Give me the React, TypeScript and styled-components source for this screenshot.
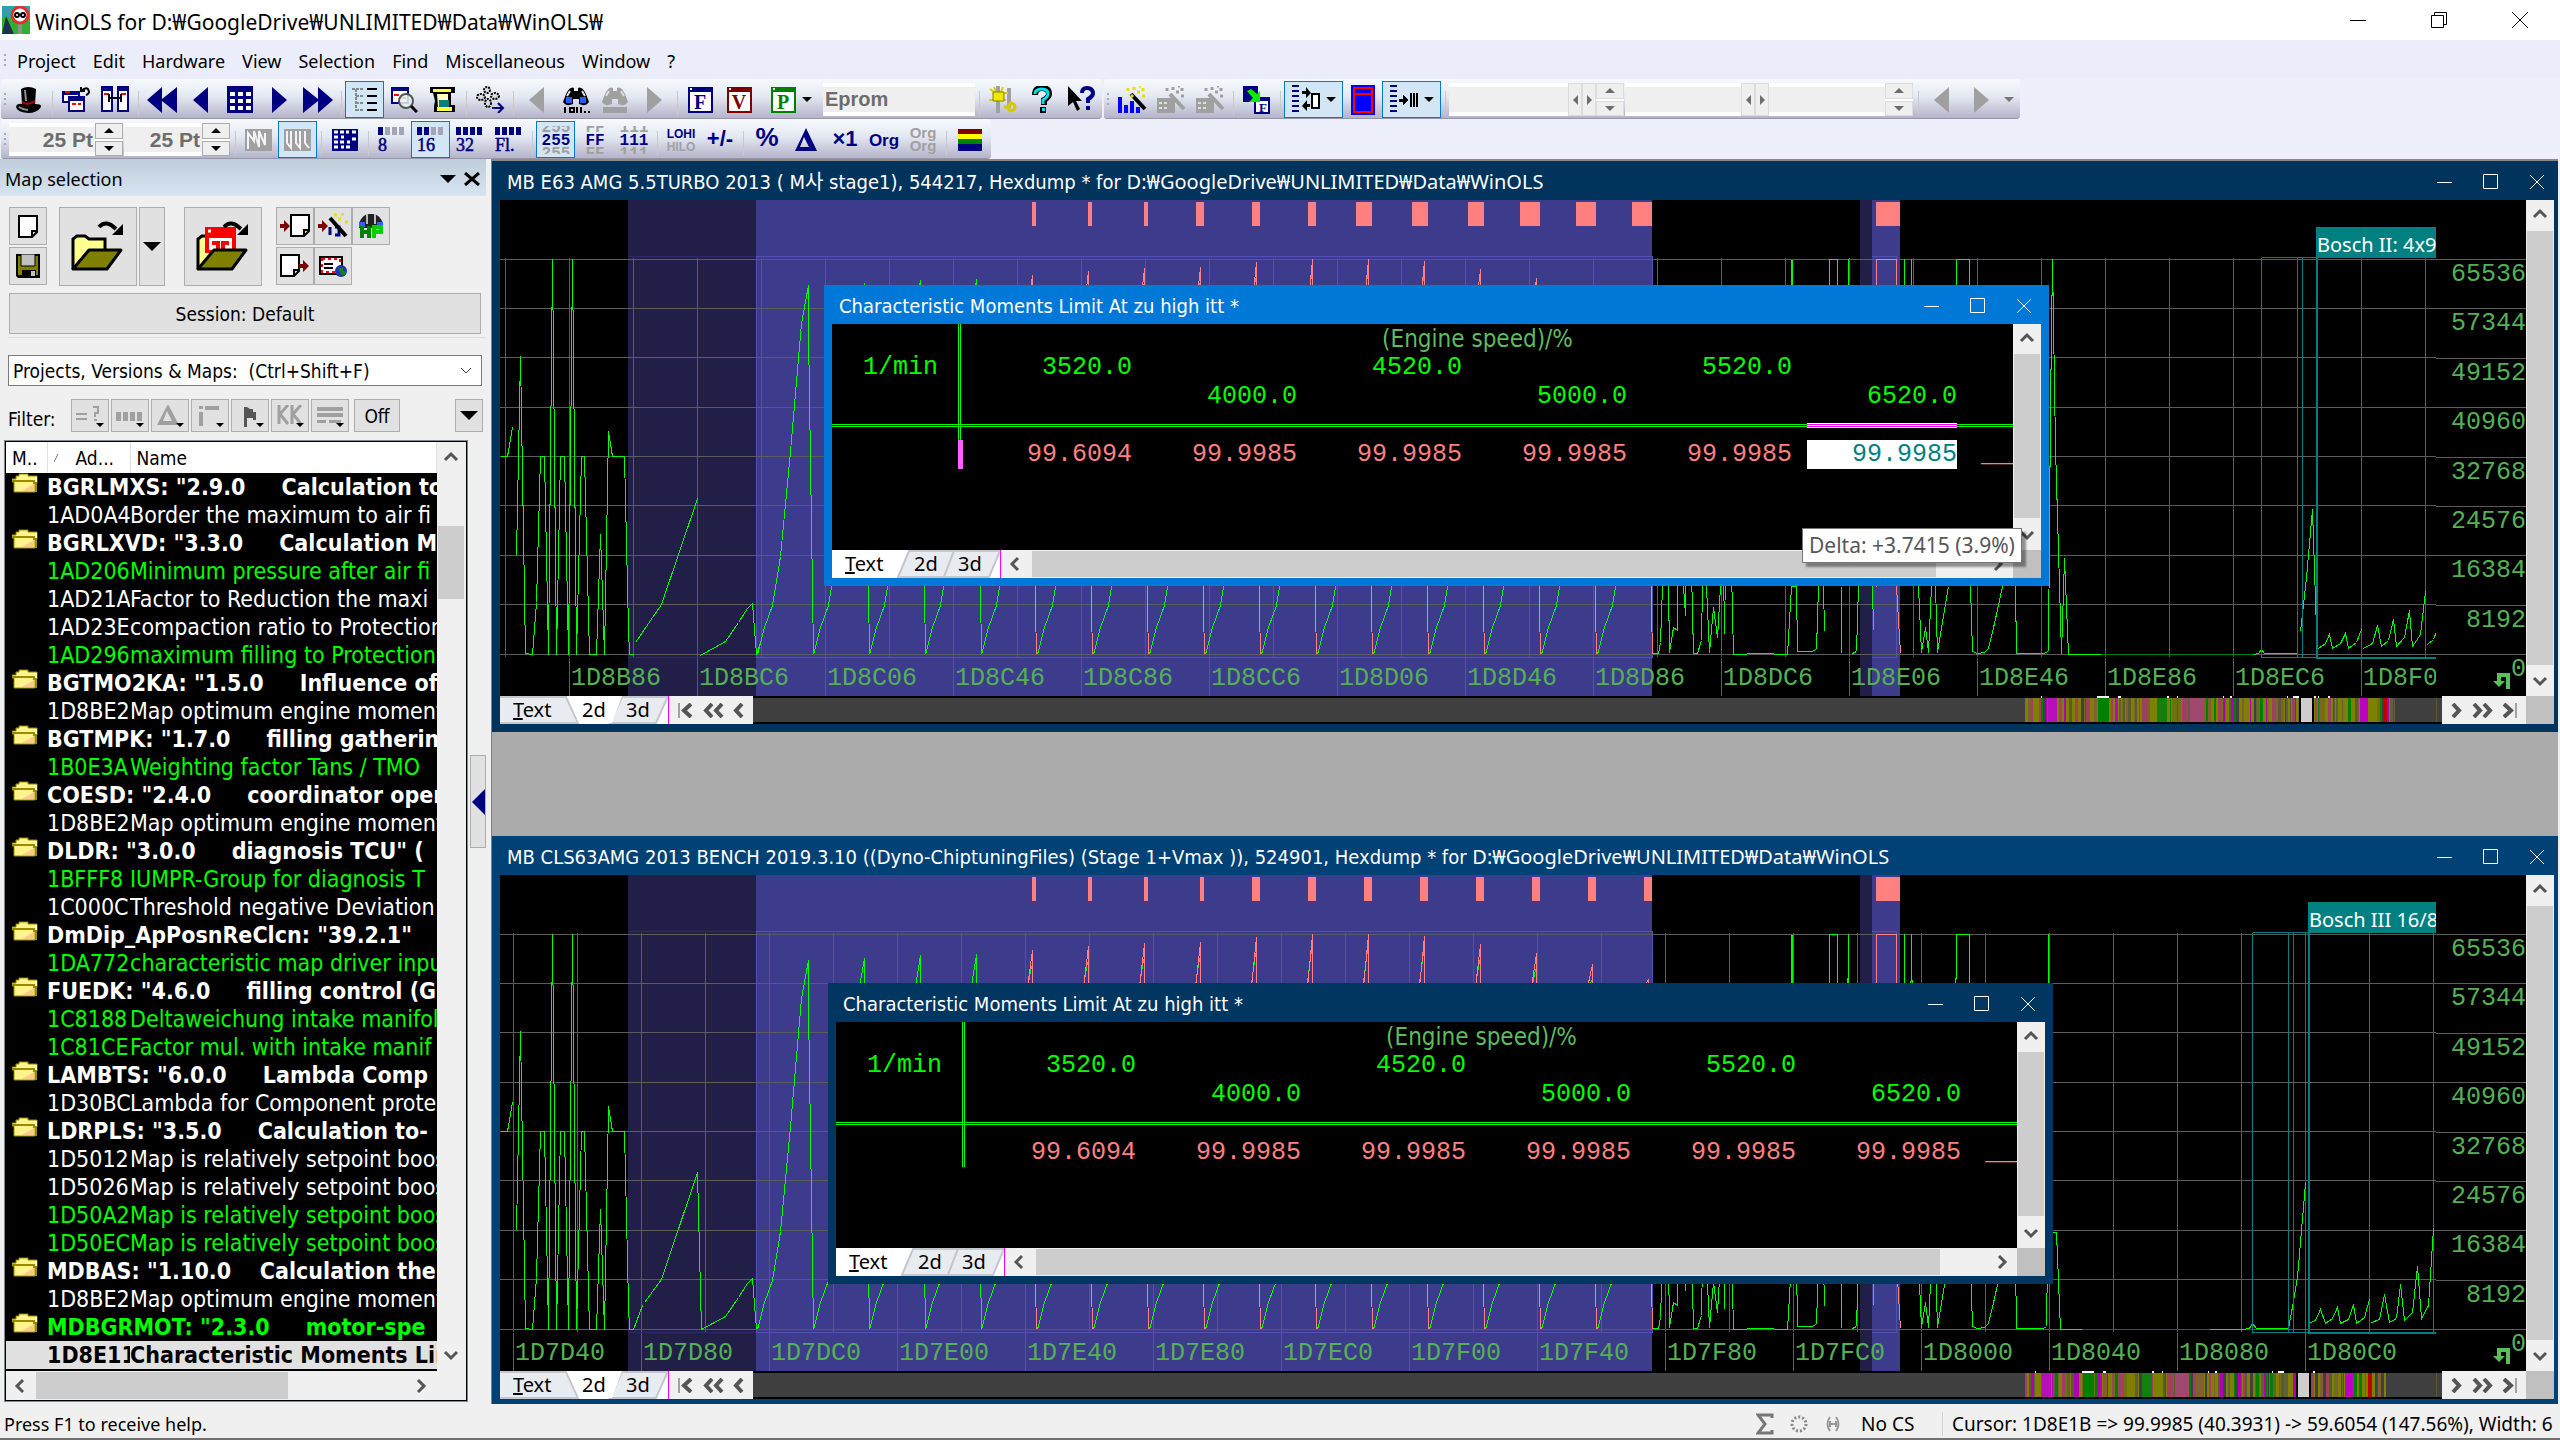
import React from "react";
import styled, { createGlobalStyle, css } from "styled-components";

const UI = `"Noto Sans", "Noto Sans CJK KR", sans-serif`;
const TAHOMA = `"DejaVu Sans Condensed", "Noto Sans CJK KR", sans-serif`;
const MONO = `"Liberation Mono", monospace`;
const NAVY = "#000080";
const LIME = "#00ff00";
const ROSE = "#ff8080";
const GREY = "#a0a0a0";

const GlobalStyle = createGlobalStyle`
  * { box-sizing: border-box; }
  html, body { margin: 0; background: #f0f0f0; overflow: hidden; }
  button, input, select { font: inherit; color: inherit; margin: 0; padding: 0; border: 0; border-radius: 0; }
  svg { display: block; flex: none; }
`;

/* ───────────── frame ───────────── */

const Page = styled.div`
  display: flex;
  flex-direction: column;
  min-height: 100vh;
  font: 18px ${UI};
  color: #000;
`;

const TitleBar = styled.header`
  display: flex;
  align-items: center;
  height: 40px;
  padding-left: 2px;
  background: #fff;
`;
const AppTitle = styled.h1`
  flex: 1;
  margin: 0 0 0 5px;
  padding-top: 4px;
  font: 21px/28px ${UI};
`;
const CaptionButton = styled.button<{ $w: number }>`
  display: grid;
  place-items: center;
  width: ${(p) => p.$w}px;
  height: 100%;
  background: none;
  color: inherit;
`;
const ButtonCluster = styled.div`
  display: flex;
  gap: 12px;
  height: 100%;
`;

const MenuBar = styled.nav`
  display: flex;
  align-items: center;
  height: 39px;
  padding: 3px 0 0 4px;
  background: #ebeefa;
`;
const MenuList = styled.div`
  display: flex;
  gap: 17px;
  margin-left: 11px;
`;
const MenuItem = styled.button`
  background: none;
  font-size: 18px;
  line-height: 24px;
`;
const Grip = styled.span`
  width: 2px;
  height: 14px;
  flex: none;
  background: repeating-linear-gradient(#a6a9b8 0 2px, transparent 2px 5px);
`;

/* ───────────── toolbars ───────────── */

const ToolArea = styled.div`
  display: flex;
  flex-direction: column;
  background: #edf0fb;
`;
const ToolRow = styled.div`
  display: flex;
  gap: 2px;
  height: 40px;
  padding-left: 1px;
`;
const ToolBarBox = styled.div`
  display: flex;
  align-items: center;
  height: 40px;
  padding: 2px 2px 0 3px;
  border-bottom: 1px solid #9696a8;
  border-radius: 3px 4px 4px 3px;
  background: linear-gradient(#f6fafd, #e4e8f2 45%, #b4b4ca);
`;
const ToolGrip = styled(Grip)`
  margin-right: 3px;
`;
const Tool = styled.button<{ $on?: boolean; $w?: number }>`
  display: flex;
  align-items: center;
  justify-content: center;
  gap: 6px;
  flex: none;
  width: ${(p) => p.$w ?? 39}px;
  height: 37px;
  background: ${(p) => (p.$on ? "#d3e6f5" : "none")};
  border: 1px solid ${(p) => (p.$on ? "#0078d7" : "transparent")};
`;
const Sep = styled.span`
  flex: none;
  width: 1px;
  height: 25px;
  margin: 8px 3px 0 4px;
  background: #c9c9c9;
`;
const ToolField = styled.input<{ $w: number; $right?: boolean }>`
  width: ${(p) => p.$w}px;
  height: 33px;
  padding: 0 2px;
  border-top: 4px solid #fff;
  border-bottom: 4px solid #fff;
  background: #efefef;
  color: #6d6d6d;
  font: bold ${(p) => (p.$right ? 21 : 20)}px "Liberation Sans", sans-serif;
  text-align: ${(p) => (p.$right ? "right" : "left")};
`;
const SpinBox = styled.span`
  display: grid;
  grid-template-rows: 1fr 1fr;
  gap: 2px;
  width: 28px;
  height: 33px;
  margin-right: 1px;
  background: #fff;
`;
const SplitBox = styled(SpinBox)`
  grid-template: 1fr / 1fr 1fr;
  gap: 0;
  margin-right: 0;
`;
const SpinButton = styled.button<{ $dim?: boolean }>`
  display: grid;
  place-items: center;
  background: #efefef;
  border: 1px solid ${(p) => (p.$dim ? "#dcdcdc" : "#adadad")};
  color: ${(p) => (p.$dim ? "#6d6d6d" : "#000")};
`;

const Tri = ({ d, s = 5, c = "currentColor" }: { d: "u" | "d" | "l" | "r"; s?: number; c?: string }) => {
  const w = s * 2;
  const p = {
    u: `M0 ${s}L${s} 0L${w} ${s}z`,
    d: `M0 0L${w} 0L${s} ${s}z`,
    l: `M${s} 0L${s} ${w}L0 ${s}z`,
    r: `M0 0L${s} ${s}L0 ${w}z`,
  }[d];
  const flat = d === "u" || d === "d";
  return (
    <svg width={flat ? w : s} height={flat ? s : w} aria-hidden="true">
      <path d={p} fill={c} />
    </svg>
  );
};

const Spin = ({ dim, label }: { dim?: boolean; label: string }) => (
  <SpinBox>
    <SpinButton $dim={dim} aria-label={`${label} up`}><Tri d="u" /></SpinButton>
    <SpinButton $dim={dim} aria-label={`${label} down`}><Tri d="d" /></SpinButton>
  </SpinBox>
);
const Split = ({ label }: { label: string }) => (
  <SplitBox>
    <SpinButton $dim aria-label={`${label} left`}><Tri d="l" /></SpinButton>
    <SpinButton $dim aria-label={`${label} right`}><Tri d="r" /></SpinButton>
  </SplitBox>
);

/* ───────────── icons ───────────── */

const Ico = ({ w = 28, h = 27, children }: { w?: number; h?: number; children: React.ReactNode }) => (
  <svg width={w} height={h} viewBox={`0 0 ${w} ${h}`} aria-hidden="true">{children}</svg>
);
const Arrow = ({ back, double, c = NAVY }: { back?: boolean; double?: boolean; c?: string }) => (
  <Ico w={30} h={26}>
    <g fill={c} transform={back ? "translate(30 0) scale(-1 1)" : undefined}>
      {double ? <path d="M0 0L15 12V0L30 13L15 26V14L0 26z" /> : <path d="M8 0L23 13L8 26z" />}
    </g>
  </Ico>
);
const HatIcon = () => (
  <Ico>
    <path d="M6 3Q13-1 21 3L20 18Q27 18 26 21Q22 27 13 27Q1 26 1 20Q3 17 7 18z" fill="#000" />
    <path d="M10 4L11 15M4 21Q8 24 13 24" stroke="#909090" strokeWidth="2" fill="none" />
    <path d="M7 16Q13 20 20 15" stroke="#c00000" strokeWidth="2" fill="none" />
  </Ico>
);
const WindowsIcon = () => (
  <Ico w={30}>
    <path d="M1 5h18v5h5v16H7V17H1z" fill={NAVY} />
    <path d="M3 9h14v1H7v5H3zM9 15h13v9H9z" fill="#fff" />
    <path d="M4 6h5M11 18h4M17 18h3" stroke="red" strokeWidth="2" />
    <path d="M20 1v4h4M20 5Q27-1 28 6Q28 8 25 9" stroke="#000" strokeWidth="2" fill="none" />
  </Ico>
);
const CompareIcon = () => (
  <Ico w={30}>
    <path d="M1 0h12v26H1zM17 0h12v26H17z" fill={NAVY} />
    <path d="M3 5h8v19H3zM19 5h8v19H19z" fill="#fff" />
    <path d="M4 8h5M21 8h5" stroke="red" strokeWidth="2" />
    <path d="M9 12h12M9 8v8M21 8v8" stroke="#000" strokeWidth="2" />
  </Ico>
);
const GridIcon = () => (
  <Ico>
    <path d="M1 0h26v27H1z" fill={NAVY} />
    <path d="M4 6h5v4H4zM12 6h5v4h-5zM20 6h5v4h-5zM4 13h5v4H4zM12 13h5v4h-5zM20 13h5v4h-5zM4 20h5v4H4zM12 20h5v4h-5zM20 20h5v4h-5z" fill="#fff" />
  </Ico>
);
const TreeIcon = () => (
  <Ico>
    <path d="M5 3v22M1 3h12M5 10h8M5 17h8M5 24h8" stroke="#888" strokeWidth="2" fill="none" strokeDasharray="3 1" />
    <path d="M16 3h10M16 10h10M16 17h10M16 24h10" stroke="#000" strokeWidth="2" />
  </Ico>
);
const ZoomWinIcon = () => (
  <Ico>
    <path d="M1 1h18v17H1z" fill={NAVY} />
    <path d="M3 5h14v11H3z" fill="#fff" />
    <path d="M4 9h5M11 12h5" stroke="red" strokeWidth="2" />
    <circle cx="16" cy="15" r="7" fill="#e8f0f0" fillOpacity=".85" stroke="#555" strokeWidth="2" />
    <path d="M21 20l6 6" stroke="#000" strokeWidth="3" />
  </Ico>
);
const ScrollIcon = () => (
  <Ico>
    <path d="M1 1h25v6h-4v12h4v7H5v-6l1-5-2-8H1z" fill="#000" />
    <path d="M4 3h18v3H4zM8 21h15v4H8z" fill="#ffff40" />
    <path d="M8 8h11v13H9z" fill="#ffffc0" />
    <path d="M10 14h10v7H10z" fill="#008080" />
  </Ico>
);
const StepsIcon = () => (
  <Ico w={30}>
    <g fill="#ddd" stroke="#000" strokeWidth="2" strokeDasharray="2 1">
      <ellipse cx="6" cy="11" rx="4" ry="3" /><ellipse cx="12" cy="4" rx="3" ry="3" />
      <ellipse cx="13" cy="17" rx="3" ry="4" /><ellipse cx="20" cy="10" rx="4" ry="3" />
    </g>
    <path d="M17 22h11M23 17l5 5-5 5" stroke={NAVY} strokeWidth="2" fill="none" />
  </Ico>
);
const BinocularIcon = ({ dim }: { dim?: boolean }) => (
  <Ico>
    <path d="M4 8Q8 0 12 2V5h4V2Q20 0 24 8L27 16Q24 21 17 18V13H11V18Q4 21 1 16z" fill={dim ? GREY : "#000"} />
    <path d="M8 5l-3 5M20 5l3 5" stroke="#e0e0e0" strokeWidth="2" />
    {dim ? <path d="M2 21h24v6H2z" fill={GREY} /> : (
      <>
        <path d="M4 11h6v6H4zM18 11h6v6h-6z" fill="#2060ff" />
        <path d="M3 21v6M8 22h4v4H8zM15 21v6M19 21v6M22 26h2M26 26h2" stroke="#000" strokeWidth="2" fill="none" />
      </>
    )}
  </Ico>
);
const LetterIcon = ({ l, c }: { l: string; c: string }) => (
  <Ico w={25} h={26}>
    <path d="M0 0h25v26H0z" fill={c} />
    <path d="M2 5h21v19H2z" fill="#fff" />
    <path d="M2 2h2" stroke="#fff" strokeWidth="2" />
    <text x="12" y="22" fontFamily="Liberation Serif, serif" fontWeight="700" fontSize="20" textAnchor="middle" fill={c}>{l}</text>
  </Ico>
);
const PlugIcon = () => (
  <Ico>
    <path d="M9 0v6M9 14v13M20 2v20" stroke="#a0a0a0" strokeWidth="4" />
    <path d="M1 3l4 3M0 14h6M5 1l2 5M14 1l-2 5M14 7h5M15 14h2" stroke="#d8d000" strokeWidth="2" />
    <path d="M4 6h11v9H4z" fill="#f0e800" stroke="#808000" />
    <path d="M15 21h5M20 17v8M20 17q6 0 6 4t-6 4" stroke="#d8c800" strokeWidth="3" fill="none" />
  </Ico>
);
const HelpIcon = () => (
  <Ico>
    <path d="M7 9Q7 2 14 2Q21 2 21 8Q21 11 16 14V19" stroke="#000" strokeWidth="6" fill="none" />
    <path d="M7 8Q7 3 14 3Q20 3 20 8Q20 11 15 14V18" stroke="#00e0f0" strokeWidth="3" fill="none" />
    <path d="M12 21h6v6h-6z" fill="#000" /><path d="M14 22h3v3h-3z" fill="#00e0f0" />
  </Ico>
);
const PointerHelpIcon = () => (
  <Ico>
    <path d="M1 0v20l5-4 4 9 3-2-4-8h6z" fill="#000" />
    <path d="M15 7Q15 2 20 2Q26 2 26 8Q25 11 21 13V17" stroke={NAVY} strokeWidth="4" fill="none" />
    <path d="M19 20h4v4h-4z" fill={NAVY} />
  </Ico>
);
const WandIcon = ({ dim }: { dim?: boolean }) => (
  <Ico w={30} h={28}>
    {dim ? (
      <g fill={GREY}><path d="M1 12h18v15H1z" /><path d="M3 17h3M8 17h3M3 22h3M8 22h3" stroke="#ddd" strokeWidth="2" /></g>
    ) : (
      <path d="M1 11h4v16H1zM7 19h4v8H7zM13 15h4v12h-4zM19 21h4v6h-4z" fill="#0000ff" />
    )}
    <path d="M14 8l14 15" stroke={dim ? GREY : "#000"} strokeWidth="4" />
    <path d="M11 2v3M17 1v3M20 6h3M26 2v3M25 10h3M22 0h2M14 9l2 2" stroke={dim ? GREY : "#e8e000"} strokeWidth="3" />
  </Ico>
);
const CopyVersionIcon = () => (
  <Ico w={30} h={28}>
    <path d="M1 0h15v16H1zM12 11h16v17H12z" fill={NAVY} />
    <path d="M14 15h12v11H14z" fill="#fff" />
    <text x="21" y="26" fontFamily="Liberation Serif, serif" fontWeight="700" fontSize="13" textAnchor="middle" fill={NAVY}>F</text>
    <path d="M5 5l4-2 6 5 3-3v11H7l4-4z" fill="#00f000" />
  </Ico>
);
const LinkIcon = ({ bars }: { bars?: boolean }) => (
  <Ico h={30}>
    <path d="M0 1h7M0 6h7M0 11h7M0 16h7M0 21h7M0 26h7" stroke={NAVY} strokeWidth="2" />
    {bars ? (
      <g shapeRendering="crispEdges">
        <path d="M9 14h5v3H9z" /><path d="M13 10l5 5-5 6z" />
        <path d="M20 8h2v14h-2zM23 8h2v14h-2zM26 8h2v14h-2z" />
      </g>
    ) : (
      <>
        <path d="M10 6h4V2l5 6-5 5V9h-4zM18 19h-3v-4l-5 6 5 5v-4h3z" />
        <path d="M20 9h7v14h-7z" fill="#fff" stroke="#000" strokeWidth="2" />
      </>
    )}
  </Ico>
);
const RedBoxIcon = () => (
  <Ico w={24} h={30}>
    <path d="M1 1h22v28H1z" fill="#0000ff" stroke="#0000ff" strokeWidth="2" />
    <path d="M3 3h18v24H3zM3 9h18" fill="none" stroke="red" strokeWidth="2" />
  </Ico>
);
const BitsIcon = ({ n, t }: { n: number; t: string }) => (
  <Ico w={27} h={32}>
    {[0, 1, 2, 3].map((i) => <path key={i} d={`M${i * 7} 3h5v8h-5z`} fill={i < n ? NAVY : "#a4a4b4"} />)}
    <text x="0" y="27" fontFamily="Liberation Serif, serif" fontSize="18" fill={NAVY} stroke={NAVY} strokeWidth=".5">{t}</text>
  </Ico>
);
const StackIcon = ({ t }: { t: string }) => (
  <Ico w={30} h={28}>
    {[6, 19, 32].map((y, i) => (
      <text key={y} x="15" y={y} fontFamily="Liberation Mono, monospace" fontWeight="700" fontSize="16" textAnchor="middle" fill={i === 1 ? NAVY : GREY}>{t}</text>
    ))}
  </Ico>
);
const WaveIcon = ({ alt }: { alt?: boolean }) => (
  <Ico w={27} h={22}>
    <path d="M0 0h27v22H0z" fill={GREY} />
    <path d={alt ? "M3 2v12l4 5V2M12 2v12l4 5V2M21 2v12l4 5" : "M3 20V4l6 8V2l5 16V2l6 14V4"} stroke="#f4f4f8" strokeWidth="2" fill="none" />
  </Ico>
);
const TableIcon = () => (
  <Ico w={26} h={22}>
    <path d="M0 0h26v22H0z" fill={NAVY} />
    <path d="M2 3h4M8 3h4M14 3h3M20 3h4M2 8h4M9 8h3M2 13h4M8 13h4M15 13h3M20 10h4M2 18h4M9 18h3M14 18h4" stroke="#fff" strokeWidth="3" />
  </Ico>
);
const WordIcon = ({ a, b, size, c = NAVY, c2 = GREY }: { a: string; b?: string; size: number; c?: string; c2?: string }) => (
  <Ico w={32} h={28}>
    <text x="16" y={b ? 12 : 20} fontFamily="Liberation Sans, sans-serif" fontWeight="700" fontSize={size} textAnchor="middle" fill={c}>{a}</text>
    {b && <text x="16" y="25" fontFamily="Liberation Sans, sans-serif" fontWeight="700" fontSize={size} textAnchor="middle" fill={c2}>{b}</text>}
  </Ico>
);
const DeltaIcon = ({ c = NAVY }: { c?: string }) => (
  <Ico w={24} h={24}><path d="M12 0L23 23H1zM10 9L6 19h9z" fill={c} fillRule="evenodd" /></Ico>
);
const FlagIcon = () => (
  <Ico w={24} h={22}>
    <path d="M0 0h24v6H0z" fill="#800000" /><path d="M0 5h24v6H0z" fill="#ffff00" />
    <path d="M0 10h24v6H0z" fill="#008000" /><path d="M0 15h24v7H0z" fill={NAVY} />
  </Ico>
);
const AppIcon = () => (
  <Ico w={28} h={28}>
    <path d="M0 0h28v14H0z" fill="#30a0b0" /><path d="M0 12h28v16H0z" fill="#30b030" />
    <path d="M0 28L4 10l8 18z" fill="#203050" />
    <path d="M16 16h4v12h-4z" fill="#909090" />
    <circle cx="18" cy="9" r="8" fill="#fff" stroke="#e03030" strokeWidth="3" />
    <circle cx="15" cy="9" r="2" fill="none" stroke="#000" strokeWidth="2" /><circle cx="21" cy="9" r="2" fill="none" stroke="#000" strokeWidth="2" />
  </Ico>
);

/* ───────────── map selection panel ───────────── */

const Main = styled.main`
  display: flex;
  flex: 1;
  min-height: 0;
`;
const Side = styled.aside`
  display: flex;
  flex-direction: column;
  width: 486px;
  margin-right: 5px;
  flex: none;
  background: #f0f0f0;
`;
const SideHead = styled.div`
  display: flex;
  align-items: center;
  height: 37px;
  padding: 3px 2px 0 5px;
  background: linear-gradient(#bfcddb, #d7e4f2);
`;
const SideTitle = styled.h2`
  flex: 1;
  margin: 0;
  font: 18px/26px ${UI};
`;
const PlainButton = styled.button`
  display: grid;
  place-items: center;
  width: 24px;
  height: 24px;
  background: none;
`;
const ActionRow = styled.div`
  display: flex;
  padding: 11px 9px 0;
`;
const ButtonGrid = styled.div<{ $cols: number; $left: number }>`
  display: grid;
  grid-template-columns: repeat(${(p) => p.$cols}, 38px);
  grid-auto-rows: 38px;
  gap: 2px 0;
  margin-left: ${(p) => p.$left}px;
`;
const WinButton = styled.button<{ $w?: number; $h?: number; $ml?: number }>`
  display: grid;
  place-items: center;
  width: ${(p) => (p.$w ? `${p.$w}px` : "auto")};
  height: ${(p) => (p.$h ? `${p.$h}px` : "auto")};
  margin-left: ${(p) => p.$ml ?? 0}px;
  background: #e1e1e1;
  border: 1px solid #adadad;
  font: 19px ${TAHOMA};
`;
const SessionButton = styled(WinButton)`
  height: 41px;
  margin: 7px 5px 3px 9px;
`;
const Rule = styled.hr`
  width: 478px;
  margin: 0 0 17px 8px;
  border: 0;
  border-top: 1px solid #dcdcdc;
`;
const Scope = styled.label`
  position: relative;
  display: block;
  height: 31px;
  margin: 0 4px 12px 8px;
`;
const ScopeSelect = styled.select`
  appearance: none;
  width: 100%;
  height: 31px;
  padding: 0 4px;
  background: #fff;
  border: 1px solid #7a7a7a;
  font: 19px ${TAHOMA};
`;
const ScopeArrow = styled.span`
  position: absolute;
  right: 10px;
  top: 12px;
  pointer-events: none;
`;
const FilterRow = styled.div`
  display: flex;
  align-items: center;
  gap: 2px;
  height: 33px;
  margin: 1px 3px 9px 8px;
  font: 19px ${TAHOMA};
`;
const FilterLabel = styled.span`
  width: 61px;
  padding-top: 6px;
`;
const Fill = styled.span`
  flex: 1;
`;
const FilterButton = styled(WinButton)`
  position: relative;
  width: 38px;
  height: 33px;
`;
const CornerMark = styled.span`
  position: absolute;
  right: 4px;
  bottom: 4px;
`;
const ListArea = styled.div`
  display: flex;
  flex: 1;
  align-items: flex-start;
  padding-left: 5px;
`;
const ListBox = styled.div`
  width: 462px;
  height: 960px;
  border: 1px solid #000;
  outline: 1px solid #828790;
  background: #f0f0f0;
  display: grid;
  grid-template: 929px 29px / 431px 28px;
`;
const ListClip = styled.div`
  overflow: hidden;
  background: #000;
`;
const MapTable = styled.table`
  width: 431px;
  table-layout: fixed;
  border-collapse: collapse;
  font: 23px/28px ${TAHOMA};
  white-space: pre;
`;
const HeadCell = styled.th`
  height: 31px;
  padding: 0 0 0 6px;
  overflow: hidden;
  background: #fff;
  border-right: 1px solid #e0e0e0;
  font: 19px ${TAHOMA};
  text-align: left;
`;
const SortHead = styled.span`
  display: flex;
  align-items: center;
  gap: 17px;
`;
const MapRow = styled.tr<{ $c: string; $sel?: boolean; $bold?: boolean }>`
  height: 28px;
  color: ${(p) => p.$c};
  background: ${(p) => (p.$sel ? "#e1e1e1" : "#000")};
  font-weight: ${(p) => (p.$bold ? 700 : 400)};
`;
const MapCell = styled.td`
  height: 28px;
  padding: 0;
  overflow: hidden;
  vertical-align: top;
`;
const IconCell = styled(MapCell)`
  padding: 0 0 0 6px;
`;
const Collapse = styled(WinButton)`
  width: 16px;
  height: 93px;
  margin: 314px 0 0 3px;
  justify-items: end;
`;

/* scroll bars */
const VBar = styled.div`
  display: flex;
  flex-direction: column;
  width: 28px;
  background: #f0f0f0;
`;
const HBar = styled.div`
  display: flex;
  flex: 1;
  background: #f0f0f0;
`;
const ArrowButton = styled.button<{ $len: number; $v?: boolean }>`
  display: grid;
  place-items: center;
  flex: none;
  background: #f0f0f0;
  ${(p) => (p.$v ? css`height: ${p.$len}px;` : css`width: ${p.$len}px;`)}
`;
const Span = styled.span<{ $g: number; $thumb?: boolean }>`
  flex: ${(p) => p.$g} 1 0;
  margin: ${(p) => (p.$thumb ? "1px" : "0")};
  background: ${(p) => (p.$thumb ? "#cdcdcd" : "none")};
`;
const Chevron = ({ d }: { d: "u" | "d" | "l" | "r" }) => {
  const p = { u: "M2 10L8 4L14 10", d: "M2 5L8 11L14 5", l: "M10 2L4 8L10 14", r: "M5 2L11 8L5 14" }[d];
  return <svg width="16" height="16" aria-hidden="true"><path d={p} fill="none" stroke="#555" strokeWidth="3" /></svg>;
};

const Folder = () => (
  <svg width="27" height="20" viewBox="0 0 27 20" aria-hidden="true">
    <path d="M4 3h3V1h9v2h9v7h-2v9H2V9H0V6h4z" fill="#fdf58c" stroke="#9a8a00" strokeWidth="1" />
    <path d="M0 8h22v2h2v9" fill="none" stroke="#9a8a00" strokeWidth="2" />
    <path d="M10 18h12v-7z" fill="#fbc890" />
    <path d="M24 4h1v5h-2z" fill="#fffbe0" />
  </svg>
);

type Entry = { g?: boolean; a?: string; t: string; green?: boolean; sel?: boolean };
const entries: Entry[] = [
  { g: true, t: 'BGRLMXS: "2.9.0     Calculation to' },
  { a: "1AD0A4", t: "Border the maximum to air fi" },
  { g: true, t: 'BGRLXVD: "3.3.0     Calculation M' },
  { a: "1AD206", t: "Minimum pressure after air fi", green: true },
  { a: "1AD21A", t: "Factor to Reduction the maxi" },
  { a: "1AD23E", t: "compaction ratio to Protection" },
  { a: "1AD296", t: "maximum filling to Protection", green: true },
  { g: true, t: 'BGTMO2KA: "1.5.0     Influence of' },
  { a: "1D8BE2", t: "Map optimum engine moment" },
  { g: true, t: 'BGTMPK: "1.7.0     filling gathering' },
  { a: "1B0E3A", t: "Weighting factor Tans / TMO", green: true },
  { g: true, t: 'COESD: "2.4.0     coordinator oper' },
  { a: "1D8BE2", t: "Map optimum engine moment" },
  { g: true, t: 'DLDR: "3.0.0     diagnosis TCU" (' },
  { a: "1BFFF8", t: "IUMPR-Group for diagnosis T", green: true },
  { a: "1C000C", t: "Threshold negative Deviation" },
  { g: true, t: 'DmDip_ApPosnReClcn: "39.2.1"' },
  { a: "1DA772", t: "characteristic map driver input", green: true },
  { g: true, t: 'FUEDK: "4.6.0     filling control (G' },
  { a: "1C8188", t: "Deltaweichung intake manifol", green: true },
  { a: "1C81CE", t: "Factor mul. with intake manif", green: true },
  { g: true, t: 'LAMBTS: "6.0.0     Lambda Comp' },
  { a: "1D30BC", t: "Lambda for Component protec" },
  { g: true, t: 'LDRPLS: "3.5.0     Calculation to-' },
  { a: "1D5012", t: "Map is relatively setpoint boos" },
  { a: "1D5026", t: "Map is relatively setpoint boos" },
  { a: "1D50A2", t: "Map is relatively setpoint boos", green: true },
  { a: "1D50EC", t: "Map is relatively setpoint boos", green: true },
  { g: true, t: 'MDBAS: "1.10.0    Calculation the' },
  { a: "1D8BE2", t: "Map optimum engine moment" },
  { g: true, t: 'MDBGRMOT: "2.3.0     motor-spe', green: true },
  { a: "1D8E11", t: "Characteristic Moments Lim", sel: true },
];

const OpenFolder = ({ project }: { project?: boolean }) => (
  <Ico w={56} h={52}>
    <path d="M3 48V18l4-3h8l4 3h16v10" fill="#ffff90" stroke="#000" strokeWidth="3" />
    {project && (
      <>
        <path d="M10 6h31v26H10z" fill="red" />
        <path d="M14 17h23v12H14z" fill="#fff" />
        <path d="M17 22h6v8M34 22h-6v8" stroke="red" strokeWidth="4" fill="none" />
        <path d="M13 10h3" stroke="#fff" strokeWidth="3" />
      </>
    )}
    <path d="M3 48L19 29h32L37 48z" fill="#808000" stroke="#000" strokeWidth="3" strokeLinejoin="round" />
    <path d="M29 6Q36-2 46 8" stroke="#000" strokeWidth="4" fill="none" />
    <path d="M53 3v11H42z" fill="#000" />
  </Ico>
);
const Doc = ({ x = 0 }: { x?: number }) => (
  <path transform={`translate(${x} 0)`} d="M1 2h18v16l-5 5H1z M19 17h-5v6" fill="#fff" stroke="#000" strokeWidth="2" />
);
const RedArrow = ({ x = 0 }: { x?: number }) => (
  <path transform={`translate(${x} 0)`} d="M0 11h4V7l6 6-6 6v-4H0z" fill="#800000" />
);

const FilterIcons: [string, React.ReactNode][] = [
  ["Filter by unknown", <path d="M0 9h11M0 14h11M17 2h5v6h-3v4M18 15h3" stroke={GREY} strokeWidth="2" fill="none" />],
  ["Filter by bits", <path d="M0 7h5v9H0zM7 7h5v9H7zM14 7h5v9h-5zM21 7h5v9h-5z" fill={GREY} />],
  ["Filter by difference", <path d="M12-1L23 20H1zM11 6L7 16h9z" fill={GREY} fillRule="evenodd" />],
  ["Filter by axis", <path d="M3 1h4v3H3zM9 1h14v4H9zM3 7h4v14H3z" fill={GREY} />],
  ["Filter by flag", <path d="M8 2h3l3 2h3v3h3v8h-3v-2h-6v9H8z" fill="#555" />],
  ["Filter by name", <path d="M3 0v19M12 0L4 9l8 10M16 0v19M25 0l-8 9 8 10" stroke={GREY} strokeWidth="3" fill="none" />],
  ["Filter by comment", <path d="M1 2h26v4H1zM1 8h26v4H1zM1 15h9v3H1zM13 15h12v3H13z" fill={GREY} />],
];

const MapSelection = () => (
  <Side>
    <SideHead>
      <SideTitle>Map selection</SideTitle>
      <PlainButton aria-label="Panel menu"><Tri d="d" s={8} /></PlainButton>
      <PlainButton aria-label="Close panel">
        <svg width="16" height="14"><path d="M1 1L15 13M15 1L1 13" stroke="#000" strokeWidth="3" /></svg>
      </PlainButton>
    </SideHead>
    <ActionRow>
      <ButtonGrid $cols={1} $left={0}>
        <WinButton aria-label="New"><Ico w={20} h={24}><Doc /></Ico></WinButton>
        <WinButton aria-label="Save">
          <Ico w={24} h={24}>
            <path d="M0 0h24v24H2l-2-2z" fill="#000" /><path d="M2 2h20v19H2z" fill="#808000" />
            <path d="M5 0h14v12H5z" fill="#c0c0c0" stroke="#000" /><path d="M6 16h14v7H6z" fill="#000" /><path d="M15 17h4v5h-4z" fill="#c0c0c0" />
          </Ico>
        </WinButton>
      </ButtonGrid>
      <WinButton $w={78} $h={79} $ml={12} aria-label="Open"><OpenFolder /></WinButton>
      <WinButton $w={26} $h={79} $ml={2} aria-label="Open menu"><Tri d="d" s={9} /></WinButton>
      <WinButton $w={78} $h={79} $ml={19} aria-label="Open project"><OpenFolder project /></WinButton>
      <ButtonGrid $cols={3} $left={14}>
        <WinButton aria-label="Import"><Ico w={30} h={26}><RedArrow /><Doc x={10} /></Ico></WinButton>
        <WinButton aria-label="Import wizard">
          <Ico w={30} h={26}><RedArrow /><path d="M12 14v8M17 14h4v8h-4" stroke={NAVY} strokeWidth="3" fill="none" /><path d="M12 5l16 18" stroke="#000" strokeWidth="4" />
            <path d="M16 2h3M23 1h3M20 6h3M27 9h3" stroke="#e8e000" strokeWidth="3" /></Ico>
        </WinButton>
        <WinButton aria-label="Find project">
          <Ico w={28} h={26}>
            <path d="M2 10Q6 0 14 1Q22 0 26 10V15H2z" fill="#222" /><path d="M10 1v10M18 1v10" stroke="#bbb" strokeWidth="2" />
            <path d="M2 9h6v5H2zM20 9h6v5h-6z" fill="#3060ff" />
            <path d="M5 13v12M12 13v12M5 19h7" stroke="#008000" strokeWidth="4" fill="none" />
            <path d="M17 25V14h7v5h-6" stroke="#00d000" strokeWidth="4" fill="none" />
          </Ico>
        </WinButton>
        <WinButton aria-label="Export"><Ico w={30} h={26}><Doc /><RedArrow x={19} /></Ico></WinButton>
        <WinButton aria-label="Mail">
          <Ico w={28} h={24}>
            <path d="M1 3h22v17H1z" fill="#fff" stroke="#000" strokeWidth="2" />
            <path d="M3 5h18v13H3z" fill="none" stroke="red" strokeWidth="2" strokeDasharray="3 3" />
            <path d="M5 10h9M5 14h9" stroke="#000" strokeWidth="2" />
            <circle cx="22" cy="17" r="6" fill="#2030c0" /><path d="M19 14h5v3h3v4h-5z" fill="#108020" />
          </Ico>
        </WinButton>
      </ButtonGrid>
    </ActionRow>
    <SessionButton>Session: Default</SessionButton>
    <Rule />
    <Scope>
      <ScopeSelect aria-label="Scope" defaultValue="pvm">
        <option value="pvm">Projects, Versions &amp; Maps:&nbsp; (Ctrl+Shift+F)</option>
      </ScopeSelect>
      <ScopeArrow><svg width="12" height="8"><path d="M1 1L6 6L11 1" fill="none" stroke="#444" strokeWidth="1" /></svg></ScopeArrow>
    </Scope>
    <FilterRow>
      <FilterLabel>Filter:</FilterLabel>
      {FilterIcons.map(([label, icon]) => (
        <FilterButton key={label} aria-label={label}>
          <Ico w={28} h={22}>{icon}</Ico>
          <CornerMark><Tri d="d" s={4} c="#000" /></CornerMark>
        </FilterButton>
      ))}
      <WinButton $w={46} $h={33} $ml={3}>Off</WinButton>
      <Fill />
      <WinButton $w={28} $h={33} aria-label="Filter menu"><Tri d="d" s={9} /></WinButton>
    </FilterRow>
    <ListArea>
      <ListBox>
        <ListClip>
          <MapTable>
            <colgroup><col style={{ width: 41 }} /><col style={{ width: 83 }} /><col /></colgroup>
            <thead>
              <tr>
                <HeadCell>M..</HeadCell>
                <HeadCell><SortHead><svg width="5" height="8" aria-hidden="true"><path d="M0 8L4 0" stroke="#777" /></svg>Ad...</SortHead></HeadCell>
                <HeadCell>Name</HeadCell>
              </tr>
            </thead>
            <tbody>
              {entries.map((e, i) => (
                <MapRow key={i} $c={e.sel ? "#000" : e.green ? LIME : "#fff"} $sel={e.sel} $bold={e.g || e.sel}>
                  <IconCell>{e.g && <Folder />}</IconCell>
                  {e.g ? <MapCell colSpan={2}>{e.t}</MapCell> : <><MapCell>{e.a}</MapCell><MapCell>{e.t}</MapCell></>}
                </MapRow>
              ))}
            </tbody>
          </MapTable>
        </ListClip>
        <VBar>
          <ArrowButton $v $len={32} aria-label="Scroll up"><Chevron d="u" /></ArrowButton>
          <Span $g={51} /><Span $g={73} $thumb /><Span $g={741} />
          <ArrowButton $v $len={32} aria-label="Scroll down"><Chevron d="d" /></ArrowButton>
        </VBar>
        <HBar>
          <ArrowButton $len={29} aria-label="Scroll left"><Chevron d="l" /></ArrowButton>
          <Span $g={253} $thumb /><Span $g={116} />
          <ArrowButton $len={33} aria-label="Scroll right"><Chevron d="r" /></ArrowButton>
        </HBar>
      </ListBox>
      <Collapse aria-label="Collapse panel"><Tri d="l" s={13} c={NAVY} /></Collapse>
    </ListArea>
  </Side>
);

/* ───────────── MDI workspace ───────────── */

const Workspace = styled.section`
  position: relative;
  flex: 1;
  min-height: 1245px;
  margin: 0 2px 2px 0;
  overflow: hidden;
  background: #ababab;
  border-left: 1px solid #808080;
  border-top: 2px solid #8a8a8a;
`;
const MdiWindow = styled.section<{ $top: number; $bg: string }>`
  position: absolute;
  left: 0;
  right: 0;
  top: ${(p) => p.$top}px;
  padding: 0 4px 8px 8px;
  background: ${(p) => p.$bg};
  color: #fff;
`;
const PopupWindow = styled(MdiWindow)<{ $left: number }>`
  left: ${(p) => p.$left}px;
  right: auto;
  width: 1225px;
  padding-right: 8px;
`;
const Caption = styled.header`
  display: flex;
  align-items: center;
  height: 39px;
  padding-left: 7px;
  font: 20px ${TAHOMA};
`;
const CaptionText = styled.h2`
  flex: 1;
  margin: 0;
  padding-top: 2px;
  font: inherit;
  line-height: 26px;
  white-space: nowrap;
`;
const PathText = styled.span`
  font-family: ${UI};
`;
const Body = styled.div<{ $h: number }>`
  display: flex;
  height: ${(p) => p.$h}px;
  background: #000;
`;
const Plot = styled.svg`
  flex: 1;
  min-width: 0;
`;
const Axis = styled.div`
  display: grid;
  grid-template-rows: repeat(8, 1fr) 42px;
  width: 90px;
  padding-top: 59px;
`;
const AxisMark = styled.div`
  display: flex;
  justify-content: flex-end;
  align-items: flex-start;
  border-top: 1px solid #5c5c5c;
  color: #55b055;
  font: 25px/30px ${MONO};
`;
const BottomBar = styled.div`
  display: flex;
  height: 28px;
`;
const Corner = styled.span`
  width: 28px;
  background: #c0c0c0;
`;
const TabStrip = styled.div`
  position: relative;
  display: flex;
  width: 169px;
  background: #fff;
  border-right: 1px solid #ff00ff;
  color: #000;
  font: 20px/26px ${UI};
`;
const TabShape = styled.svg`
  position: absolute;
  left: 0;
  top: 0;
`;
const Tab = styled.button<{ $w: number; $pl: number }>`
  position: relative;
  width: ${(p) => p.$w}px;
  padding-left: ${(p) => p.$pl}px;
  background: none;
  text-align: left;
`;
const NavGroup = styled.div`
  display: flex;
  align-items: center;
  justify-content: space-evenly;
  width: 84px;
  background: #f0f0f0;
`;
const NavButton = styled.button`
  background: none;
`;

const CaptionButtons = () => (
  <ButtonCluster>
    <CaptionButton $w={34} aria-label="Minimize"><svg width="16" height="16"><path d="M0 9.5h15" stroke="currentColor" /></svg></CaptionButton>
    <CaptionButton $w={34} aria-label="Maximize"><svg width="16" height="18"><path d="M.5 2.5h14v14h-14z" fill="none" stroke="currentColor" /></svg></CaptionButton>
    <CaptionButton $w={34} aria-label="Close"><svg width="16" height="18"><path d="M1 3L15 17M15 3L1 17" stroke="currentColor" /></svg></CaptionButton>
  </ButtonCluster>
);

const Tabs = ({ active }: { active: "Text" | "2d" }) => (
  <TabStrip>
    <TabShape width="168" height="28" aria-hidden="true">
      <g stroke="#c4c8cd" strokeWidth="2">
        {active === "2d" ? (
          <>
            <path d="M-2 1H66L78 27H-2z" fill="#e8ecf0" />
            <path d="M122 1H180V0H168L156 27H110z" fill="#e8ecf0" />
            <path d="M67 0H122L112 27H79z" fill="#fff" stroke="none" />
          </>
        ) : (
          <>
            <path d="M77 1H122L112 27H66z" fill="#e8ecf0" />
            <path d="M122 1H168L157 27H112z" fill="#e8ecf0" />
          </>
        )}
      </g>
    </TabShape>
    <Tab $w={71} $pl={13}><u>T</u>ext</Tab>
    <Tab $w={44} $pl={11}>2d</Tab>
    <Tab $w={53} $pl={11}>3d</Tab>
  </TabStrip>
);

const Jump = ({ d, w = 12 }: { d: string; w?: number }) => (
  <svg width={w} height="15" aria-hidden="true"><path d={d} fill="none" stroke="#555" strokeWidth="4" /></svg>
);
const JumpEnd = ({ back }: { back?: boolean }) => (
  <svg width="15" height="15" aria-hidden="true">
    <path d={back ? "M13 1L6 7.5L13 14" : "M2 1L9 7.5L2 14"} fill="none" stroke="#555" strokeWidth="4" />
    <path d={back ? "M1 0V15" : "M14 0V15"} stroke="#555" strokeWidth="1" />
  </svg>
);

/* overview strip: colour runs over the address range */
const stripColors = ["#808000", "#404040", "#808000", "#008000", "#808000", "#a04060", "#808000", "#5a5a30", "#b000b0", "#808000", "#806030", "#606040", "#808000", "#707010"];
const stripBlocks: [number, number, string][] = [
  [23, 9, "#b810b8"], [73, 11, "#008000"], [90, 2, "#c000c0"], [132, 10, "#108010"], [157, 6, "#a04060"], [165, 14, "#a04870"], [335, 8, "#c000c0"], [358, 4, "#c00000"],
];
const stripMarks: [number, number][] = [[16, 1], [72, 12], [93, 3], [142, 2], [152, 1], [198, 1], [205, 2], [262, 1], [268, 6], [289, 2], [293, 1], [303, 2]];
const Strip = styled.svg`
  flex: 1;
  min-width: 0;
  background: #000;
`;
const Overview = ({ shift }: { shift: number }) => {
  const bars: React.ReactNode[] = [];
  let seed = 7 + shift;
  for (let x = 0; x < 370 - shift * 3; ) {
    seed = (seed * 48271) % 2147483647;
    const w = 1 + ((seed >> 8) % 3);
    bars.push(<rect key={x} x={1272 + x} y="2" width={w} height="24" fill={stripColors[(seed >> 12) % stripColors.length]} />);
    x += w;
  }
  return (
    <Strip height="28" aria-hidden="true" shapeRendering="crispEdges">
      <rect y="2" width="100%" height="24" fill="#404040" />
      {bars}
      {stripBlocks.map(([x, w, c]) => <rect key={x} x={1272 + x - shift * (x > 60 ? 5 : 2)} y="2" width={w} height="24" fill={c} />)}
      {stripMarks.map(([x, w]) => <rect key={x} x={1272 + x - shift * (x > 60 ? 5 : 2)} width={w} height="2" fill="#fff" />)}
      <rect x={1546 - shift} width="15" height="28" fill="#000" />
      <rect x={1548 - shift} y="2" width="11" height="24" fill="#cdcdcd" />
      <rect x="1683" y="2" width="1" height="24" fill="#5a5a30" />
    </Strip>
  );
};

/* ───────────── chart data ───────────── */

const peaks = [85, 83, 80, 79, 75, 71, 68, 67, 62, 59, 59, 61, 69, 78, 89, 104];
const startWave =
  "M0 256H7L12 227M16 355L20 156L25 453L32 454L36 402L40 256H44L48 454L52 59L56 454L60 256H64L68 454L72 59L76 454L81 256H84L89 454H96L100 334L104 454L108 231L112 256H124L128 428L129 454H133";
const rise = (k: number) => {
  const x = 257 + 56 * k;
  const p = peaks[k];
  return `M${x} 454L${x + 7} 427L${x + 15} 405L${x + 23} 356L${x + 33} 251L${x + 44} 123L${x + 51} ${p}`;
};
const greenRises = peaks
  .map((p, k) => (k < 4 ? `${rise(k)}L${308 + 56 * k} 131L${313 + 56 * k} 454` : rise(k).replace(/L[^L]*$/, `L${307 + 56 * k} ${p + 16}`)))
  .join("");
const redPeaks = peaks
  .map((p, k) => (k < 4 ? "" : `M${303 + 56 * k} 112L${308 + 56 * k} ${p}V270L${312 + 56 * k} 454`))
  .join("");
const midWave =
  "M1152 453H1158L1160 442L1162 386L1165 250L1168 386L1169 452L1173 427L1177 430V386L1180 260L1183 386L1185 415L1188 180L1191 370L1193 453H1197L1201 440L1202 386L1204 300L1206 386L1209 452L1213 407L1217 437L1220 386L1222 300L1224 433L1225 370H1231L1233 454L1260 453L1287 454L1291 386V59M1292 59V386H1296L1297 451H1311L1316 449L1318 386L1320 200L1323 386L1324 431M1328 386L1329 59H1337L1338 386M1341 386V452M1346 240L1348 59L1349 200M1352 453L1356 451L1358 386M1372 386L1373 430M1404 59L1406 380L1409 250L1411 59L1413 240L1418 386L1421 452L1425 427L1428 452L1431 386L1433 320L1435 386L1437 452L1448 386L1454 240L1456 59H1469L1470 386L1472 451L1477 453L1484 452L1488 448L1494 423L1502 386L1508 320H1514L1516 453H1543";
const tails = {
  a: "M1543 453L1548 451L1550 207L1552 59L1555 247L1561 453L1564 358L1568 454H1600M1753 454L1758 453L1761 449L1764 453H1796M1800 431L1806 377L1812 309L1816 430M1818 448L1825 443L1829 434L1832 448L1840 443L1845 433L1848 448L1856 442L1861 429M1863 448L1872 443L1877 425L1881 446L1888 440L1893 419L1896 446L1904 437L1909 410L1912 446L1920 434L1925 391M1927 444L1933 439L1936 431",
  b: "M1543 453L1546 451L1547 386L1548 59V386M1552 357H1556L1560 454H1581M1709 454H1742L1749 453L1752 448L1756 453H1788L1793 426L1797 402L1805 308M1808 448L1815 445L1820 434L1825 448L1832 443L1837 432L1840 448L1848 444L1853 429L1856 448L1864 442L1869 424M1871 447L1879 444L1884 419L1889 447L1896 443L1900 409L1904 445L1912 437L1917 391L1921 443L1928 430L1933 353M1936 441",
};

type ChartSpec = {
  gridX: number;
  labelX: number;
  labels: string[];
  blocks: number[];
  humps: string;
  tail: string;
  mark: number;
  markText: string;
  links: number[];
};
const Chart = ({ s }: { s: ChartSpec }) => {
  const rows = [59, 108, 157, 207, 256, 305, 355, 404, 454];
  return (
    <Plot height="496" role="img" aria-label="Hexdump 2d view">
      <g shapeRendering="crispEdges">
        <rect x="128" width="128" height="496" fill="#211f47" />
        <rect x="256" width="896" height="496" fill="#3d3b8c" />
        <rect x="1360" width="12" height="496" fill="#211f47" />
        <rect x="1372" width="28" height="496" fill="#3d3b8c" />
        <path d="M128 56.5H256M128 457.5H256" stroke="#2c2a68" />
        <path d="M256 56.5H1152V457.5H256zM1372 56.5H1396V457.5H1372" stroke="#5250b4" fill="none" />
        {rows.map((y) => <line key={y} x1="0" x2="100%" y1={y + 0.5} y2={y + 0.5} stroke="#5c5c5c" />)}
        {Array.from({ length: 31 }, (_, i) => s.gridX + 64 * i).map((x) => (
          <line key={x} x1={x + 0.5} x2={x + 0.5} y1="58" y2="457" stroke="#5c5c5c" />
        ))}
        {s.labels.map((_, i) => (
          <line key={i} x1={s.labelX + 128 * i + 0.5} x2={s.labelX + 128 * i + 0.5} y1="458" y2="496" stroke="#5c5c5c" />
        ))}
        {s.blocks.map((w, i) => <rect key={i} x={536 + 56 * i - w} y="2" width={w} height="24" fill={ROSE} />)}
        <rect x="1376" y="2" width="24" height="24" fill={ROSE} />
      </g>
      <g fill="none" strokeWidth="1" shapeRendering="crispEdges" transform="translate(0.5 0.5)">
        <path d="M1568 454H1753" stroke="#008000" />
        <path d={startWave + s.humps + greenRises + midWave + s.tail} stroke={LIME} />
        <path d={`${redPeaks}M1376 386V59H1396V386L1400 453`} stroke={ROSE} />
        <path d={`M${s.links[0]} 57H${s.mark}M${s.links[0]} 57V457M${s.links[1]} 57V457M${s.links[1] + 5} 57V457M${s.links[0]} 457H${s.mark}`} stroke="#008080" />
      </g>
      <path d={`M${s.mark + 1} 57V458H1937`} stroke="#008080" strokeWidth="2" fill="none" />
      <rect x={s.mark} y="27" width={1936 - s.mark} height="31" fill="#008080" />
      <svg x={s.mark} y="27" width={1936 - s.mark} height="31">
        <text x="1" y="25" fontFamily={UI} fontSize="20" fill="#fff">{s.markText}</text>
      </svg>
      <g fontFamily={MONO} fontSize="25" fill="#55b055">
        {s.labels.map((t, i) => <text key={t} x={s.labelX + 128 * i + 2} y="485">{t}</text>)}
      </g>
    </Plot>
  );
};

const scale = ["65536", "57344", "49152", "40960", "32768", "24576", "16384", "8192", "0"];
const ReturnSlot = styled.span`
  padding-top: 17px;
`;
const ReturnArrow = () => (
  <ReturnSlot>
    <svg width="18" height="17" aria-hidden="true"><path d="M15 17V3H6V11" fill="none" stroke="#5abf5a" strokeWidth="4" /><path d="M0 9h12l-6 6z" fill="#5abf5a" /></svg>
  </ReturnSlot>
);

const Hexdump = ({ top, bg, title, path, shift, spec }: { top: number; bg: string; title: string; path: string; shift: number; spec: ChartSpec }) => (
  <MdiWindow $top={top} $bg={bg}>
    <Caption>
      <CaptionText>{title}<PathText>{path}</PathText></CaptionText>
      <CaptionButtons />
    </Caption>
    <Body $h={496}>
      <Chart s={spec} />
      <Axis>
        {scale.map((v) => <AxisMark key={v}>{v === "0" && <ReturnArrow />}{v}</AxisMark>)}
      </Axis>
      <VBar>
        <ArrowButton $v $len={30} aria-label="Scroll up"><Chevron d="u" /></ArrowButton>
        <Span $g={1} $thumb />
        <ArrowButton $v $len={30} aria-label="Scroll down"><Chevron d="d" /></ArrowButton>
      </VBar>
    </Body>
    <BottomBar>
      <Tabs active="2d" />
      <NavGroup>
        <NavButton aria-label="First"><JumpEnd back /></NavButton>
        <NavButton aria-label="Page back"><Jump w={22} d="M10 1L4 7.5L10 14M20 1L14 7.5L20 14" /></NavButton>
        <NavButton aria-label="Back"><Jump d="M10 1L4 7.5L10 14" /></NavButton>
      </NavGroup>
      <Overview shift={shift} />
      <NavGroup>
        <NavButton aria-label="Forward"><Jump d="M2 1L8 7.5L2 14" /></NavButton>
        <NavButton aria-label="Page forward"><Jump w={22} d="M2 1L8 7.5L2 14M12 1L18 7.5L12 14" /></NavButton>
        <NavButton aria-label="Last"><JumpEnd /></NavButton>
      </NavGroup>
      <Corner />
    </BottomBar>
  </MdiWindow>
);

/* ───────────── map popup ───────────── */

const TableClip = styled.div`
  flex: 1;
  overflow: hidden;
`;
const ValueTable = styled.table`
  width: 1181px;
  table-layout: fixed;
  border-collapse: separate;
  border-spacing: 0;
  font: 25px/28px ${MONO};
  text-align: right;
  white-space: nowrap;
`;
const rules = (c: string, gap: string) =>
  `linear-gradient(transparent 12px, ${gap} 12px 13px, ${c} 13px 14px, ${gap} 14px 15px, ${c} 15px 16px, ${gap} 16px 17px, transparent 17px)`;
const AxisCell = styled.th<{ $edge?: boolean; $line?: boolean }>`
  height: 29px;
  padding: 1px 0 0;
  color: ${LIME};
  font-weight: 400;
  ${(p) => p.$edge && css`border-left: 3px double ${LIME};`}
  ${(p) => p.$line && css`padding: 0; background: ${rules(LIME, "transparent")};`}
`;
const UnitCell = styled(AxisCell)`
  padding-right: 20px;
`;
const NameCell = styled(AxisCell)`
  padding-right: 19px;
  color: #5fba5f;
  font: 24px/28px ${TAHOMA};
  text-align: center;
`;
const ValueCell = styled.td<{ $edge?: "green" | "cursor" }>`
  height: 29px;
  padding: 0;
  overflow: hidden;
  color: ${ROSE};
  line-height: 29px;
  ${(p) => p.$edge === "green" && css`border-left: 3px double ${LIME};`}
  ${(p) => p.$edge === "cursor" && css`border-left: 5px solid #ff60ff;`}
`;
const MoreCell = styled(ValueCell)`
  padding-left: 24px;
  font-weight: 700;
  text-align: left;
`;
const CursorLine = styled.div`
  width: 150px;
  height: 29px;
  margin-left: auto;
  background: ${rules("#ff00ff", "#fff")};
`;
const CursorValue = styled.div`
  width: 150px;
  margin-left: auto;
  background: #fff;
  color: #008080;
`;
const Tooltip = styled.div`
  position: absolute;
  left: 978px;
  top: 243px;
  padding: 0 6px;
  background: #fff;
  border: 1px solid #767676;
  box-shadow: 4px 4px 2px rgba(0, 0, 0, 0.4);
  color: #575757;
  font: 21px/33px ${UI};
  white-space: nowrap;
`;

const upper = ["3520.0", "", "4520.0", "", "5520.0", ""];
const lower = ["", "4000.0", "", "5000.0", "", "6520.0"];
const values = ["99.6094", "99.9985", "99.9985", "99.9985", "99.9985", "99.9985"];

const MapPopup = ({ top, left, bg, cursor }: { top: number; left: number; bg: string; cursor?: boolean }) => (
  <PopupWindow $top={top} $left={left} $bg={bg}>
    <Caption>
      <CaptionText>Characteristic Moments Limit At zu high itt *</CaptionText>
      <CaptionButtons />
    </Caption>
    <Body $h={226}>
      <TableClip>
        <ValueTable>
          <colgroup>
            <col style={{ width: 126 }} /><col style={{ width: 174 }} />
            {values.slice(1).map((_, i) => <col key={i} style={{ width: 165 }} />)}
            <col />
          </colgroup>
          <thead>
            <tr><AxisCell /><NameCell $edge colSpan={7}>(Engine speed)/%</NameCell></tr>
            <tr><UnitCell>1/min</UnitCell>{upper.map((v, i) => <AxisCell key={i} $edge={i === 0}>{v}</AxisCell>)}<AxisCell /></tr>
            <tr><AxisCell />{lower.map((v, i) => <AxisCell key={i} $edge={i === 0}>{v}</AxisCell>)}<AxisCell /></tr>
            <tr>
              <AxisCell $line />
              {values.map((_, i) => <AxisCell key={i} $line $edge={i === 0}>{cursor && i === 5 && <CursorLine />}</AxisCell>)}
              <AxisCell $line />
            </tr>
          </thead>
          <tbody>
            <tr>
              <ValueCell />
              {values.map((v, i) => (
                <ValueCell key={i} $edge={i === 0 ? (cursor ? "cursor" : "green") : undefined}>
                  {cursor && i === 5 ? <CursorValue>{v}</CursorValue> : v}
                </ValueCell>
              ))}
              <MoreCell>____</MoreCell>
            </tr>
          </tbody>
        </ValueTable>
      </TableClip>
      <VBar>
        <ArrowButton $v $len={29} aria-label="Scroll up"><Chevron d="u" /></ArrowButton>
        <Span $g={1} $thumb />
        <ArrowButton $v $len={31} aria-label="Scroll down"><Chevron d="d" /></ArrowButton>
      </VBar>
    </Body>
    <BottomBar>
      <Tabs active="Text" />
      <HBar>
        <ArrowButton $len={30} aria-label="Scroll left"><Chevron d="l" /></ArrowButton>
        <Span $g={906} $thumb /><Span $g={46} />
        <ArrowButton $len={30} aria-label="Scroll right"><Chevron d="r" /></ArrowButton>
      </HBar>
      <Corner />
    </BottomBar>
    {cursor && <Tooltip role="tooltip">Delta: +3.7415 (3.9%)</Tooltip>}
  </PopupWindow>
);

/* ───────────── status bar ───────────── */

const StatusBar = styled.footer`
  display: flex;
  align-items: center;
  height: 34px;
  padding: 4px 0 0 4px;
  background: #f0f0f0;
  border-bottom: 2px solid #707070;
  font: 18px/24px ${UI};
  white-space: nowrap;
`;
const StatusText = styled.span`
  flex: 1;
`;
const StatusIcons = styled.span`
  display: flex;
  gap: 16px;
  margin-right: 19px;
`;
const StatusCell = styled.span<{ $w: number }>`
  width: ${(p) => p.$w}px;
  font-size: 19px;
  overflow: hidden;
`;
const CursorCell = styled(StatusCell)`
  padding-left: 9px;
  border-left: 1px solid #d4d4d4;
`;

const menus = ["Project", "Edit", "Hardware", "View", "Selection", "Find", "Miscellaneous", "Window", "?"];
const PATH = "D:\u20a9GoogleDrive\u20a9UNLIMITED\u20a9Data\u20a9WinOLS";

const specA: ChartSpec = {
  gridX: 5, labelX: 69,
  labels: ["1D8B86", "1D8BC6", "1D8C06", "1D8C46", "1D8C86", "1D8CC6", "1D8D06", "1D8D46", "1D8D86", "1D8DC6", "1D8E06", "1D8E46", "1D8E86", "1D8EC6", "1D8F0"],
  blocks: [4, 4, 4, 8, 8, 8, 16, 16, 16, 20, 20, 20],
  humps: "M135 442L161 404L197 298M200 455L225 441L238 422L247 408L252 403L256 454L261 439",
  tail: tails.a, mark: 1816, markText: "Bosch II: 4x9", links: [1761, 1797],
};
const specB: ChartSpec = {
  gridX: 13, labelX: 13,
  labels: ["1D7D40", "1D7D80", "1D7DC0", "1D7E00", "1D7E40", "1D7E80", "1D7EC0", "1D7F00", "1D7F40", "1D7F80", "1D7FC0", "1D8000", "1D8040", "1D8080", "1D80C0"],
  blocks: [4, 4, 4, 4, 8, 8, 8, 8, 8, 8, 8, 8],
  humps: "M133 454L142 430M144 427L161 404L197 297L201 454L225 441L238 422L247 408L252 403L256 454",
  tail: tails.b, mark: 1808, markText: "Bosch III 16/8", links: [1752, 1788],
};

export default function App() {
  return (
    <Page>
      <GlobalStyle />
      <TitleBar>
        <AppIcon />
        <AppTitle>WinOLS for {PATH}{"\u20a9"}</AppTitle>
        <CaptionButton $w={81} aria-label="Minimize"><svg width="16" height="16"><path d="M0 8.5h16" stroke="#000" /></svg></CaptionButton>
        <CaptionButton $w={81} aria-label="Restore"><svg width="16" height="16"><path d="M.5 3.5h12v12h-12zM3.5 3V.5h12v12H13" fill="none" stroke="#000" /></svg></CaptionButton>
        <CaptionButton $w={81} aria-label="Close"><svg width="16" height="16"><path d="M0 0L16 16M16 0L0 16" stroke="#000" /></svg></CaptionButton>
      </TitleBar>
      <MenuBar><Grip /><MenuList>{menus.map((m) => <MenuItem key={m}>{m}</MenuItem>)}</MenuList></MenuBar>
      <ToolArea>
        <ToolRow>
          <ToolBarBox>
            <ToolGrip />
            <Tool aria-label="Magic"><HatIcon /></Tool><Sep />
            <Tool aria-label="Cascade"><WindowsIcon /></Tool>
            <Tool aria-label="Compare"><CompareIcon /></Tool><Sep />
            <Tool aria-label="First map"><Arrow back double /></Tool>
            <Tool aria-label="Previous map"><Arrow back /></Tool>
            <Tool aria-label="Map grid"><GridIcon /></Tool>
            <Tool aria-label="Next map"><Arrow /></Tool>
            <Tool aria-label="Last map"><Arrow double /></Tool><Sep />
            <Tool $on aria-label="Map tree"><TreeIcon /></Tool>
            <Tool aria-label="Inspect window"><ZoomWinIcon /></Tool>
            <Tool aria-label="Script"><ScrollIcon /></Tool><Sep />
            <Tool aria-label="Follow"><StepsIcon /></Tool><Sep />
            <Tool aria-label="Search back"><Arrow back c={GREY} /></Tool>
            <Tool aria-label="Search"><BinocularIcon /></Tool>
            <Tool aria-label="Search again"><BinocularIcon dim /></Tool>
            <Tool aria-label="Search forward"><Arrow c={GREY} /></Tool><Sep />
            <Tool aria-label="F"><LetterIcon l="F" c={NAVY} /></Tool>
            <Tool aria-label="V"><LetterIcon l="V" c="#800000" /></Tool>
            <Tool $w={64} aria-label="P"><LetterIcon l="P" c="#008000" /><Tri d="d" s={5} /></Tool>
            <ToolField $w={152} defaultValue="Eprom" aria-label="Element" /><Sep />
            <Tool aria-label="Connect"><PlugIcon /></Tool>
            <Tool aria-label="Help"><HelpIcon /></Tool>
            <Tool aria-label="Context help"><PointerHelpIcon /></Tool>
          </ToolBarBox>
          <ToolBarBox>
            <ToolGrip />
            <Tool aria-label="Map wizard"><WandIcon /></Tool>
            <Tool aria-label="Chip wizard"><WandIcon dim /></Tool>
            <Tool aria-label="Checksum wizard"><WandIcon dim /></Tool><Sep />
            <Tool aria-label="Copy to version"><CopyVersionIcon /></Tool><Sep />
            <Tool $on $w={59} aria-label="Link windows"><LinkIcon /><Tri d="d" s={5} /></Tool>
            <Tool aria-label="Frame"><RedBoxIcon /></Tool>
            <Tool $on $w={59} aria-label="Link columns"><LinkIcon bars /><Tri d="d" s={5} /></Tool><Sep />
            <ToolField $w={119} aria-label="Value" /><Split label="Value" /><Spin dim label="Value step" />
            <ToolField $w={116} aria-label="Offset" /><Split label="Offset" />
            <ToolField $w={116} aria-label="Range" /><Spin dim label="Range" /><Sep />
            <Tool aria-label="Back"><Arrow back c={GREY} /></Tool>
            <Tool aria-label="Forward"><Arrow c={GREY} /></Tool>
            <Tool $w={18} aria-label="More"><Tri d="d" s={5} c="#777" /></Tool>
          </ToolBarBox>
        </ToolRow>
        <ToolRow>
          <ToolBarBox>
            <ToolGrip />
            <ToolField $w={86} $right defaultValue="25 Pt" aria-label="Font size" /><Spin label="Font size" />
            <ToolField $w={78} $right defaultValue="25 Pt" aria-label="Row size" /><Spin label="Row size" /><Sep />
            <Tool aria-label="Curve"><WaveIcon /></Tool>
            <Tool $on aria-label="Bars"><WaveIcon alt /></Tool><Sep />
            <Tool aria-label="Table"><TableIcon /></Tool><Sep />
            <Tool aria-label="8 bit"><BitsIcon n={1} t="8" /></Tool>
            <Tool $on aria-label="16 bit"><BitsIcon n={2} t="16" /></Tool>
            <Tool aria-label="32 bit"><BitsIcon n={4} t="32" /></Tool>
            <Tool aria-label="Float"><BitsIcon n={4} t="Fl." /></Tool><Sep />
            <Tool $on aria-label="Decimal"><StackIcon t="255" /></Tool>
            <Tool aria-label="Hex"><StackIcon t="FF" /></Tool>
            <Tool aria-label="Binary"><StackIcon t="111" /></Tool><Sep />
            <Tool aria-label="Byte order"><WordIcon a="LOHI" b="HILO" size={12} /></Tool>
            <Tool aria-label="Sign"><WordIcon a="+/-" size={22} /></Tool><Sep />
            <Tool aria-label="Percent"><WordIcon a="%" size={26} /></Tool>
            <Tool aria-label="Difference"><DeltaIcon /></Tool>
            <Tool aria-label="Factor"><WordIcon a="×1" size={22} /></Tool>
            <Tool aria-label="Original"><WordIcon a="Org" size={17} /></Tool>
            <Tool aria-label="Original compare"><WordIcon a="Org" b="Org" size={15} c={GREY} /></Tool><Sep />
            <Tool aria-label="Colours"><FlagIcon /></Tool>
          </ToolBarBox>
        </ToolRow>
      </ToolArea>
      <Main>
        <MapSelection />
        <Workspace>
          <Hexdump top={0} bg="#00345c" title="MB E63 AMG 5.5TURBO 2013 ( M사 stage1), 544217, Hexdump * for " path={PATH} shift={0} spec={specA} />
          <Hexdump top={675} bg="#004176" title="MB CLS63AMG 2013 BENCH 2019.3.10 ((Dyno-ChiptuningFiles) (Stage 1+Vmax )), 524901, Hexdump * for " path={PATH} shift={3} spec={specB} />
          <MapPopup top={822} left={336} bg="#00365f" />
          <MapPopup top={124} left={332} bg="#0078d7" cursor />
        </Workspace>
      </Main>
      <StatusBar>
        <StatusText>Press F1 to receive help.</StatusText>
        <StatusIcons>
          <Ico w={18} h={22}><path d="M16 5V2H2L9 11L2 20H16V17" fill="none" stroke="#777" strokeWidth="3" /></Ico>
          <Ico w={18} h={22}><circle cx="9" cy="11" r="7" fill="none" stroke="#888" strokeWidth="3" strokeDasharray="2 2" /></Ico>
          <Ico w={18} h={22}><path d="M6 4Q1 11 6 18M12 4Q17 11 12 18M6 8v6M12 8v6M6 11h6" fill="none" stroke="#999" strokeWidth="2" /></Ico>
        </StatusIcons>
        <StatusCell $w={81}>No CS</StatusCell>
        <CursorCell $w={618}>Cursor: 1D8E1B =&gt; 99.9985 (40.3931) -&gt; 59.6054 (147.56%), Width: 6</CursorCell>
      </StatusBar>
    </Page>
  );
}
